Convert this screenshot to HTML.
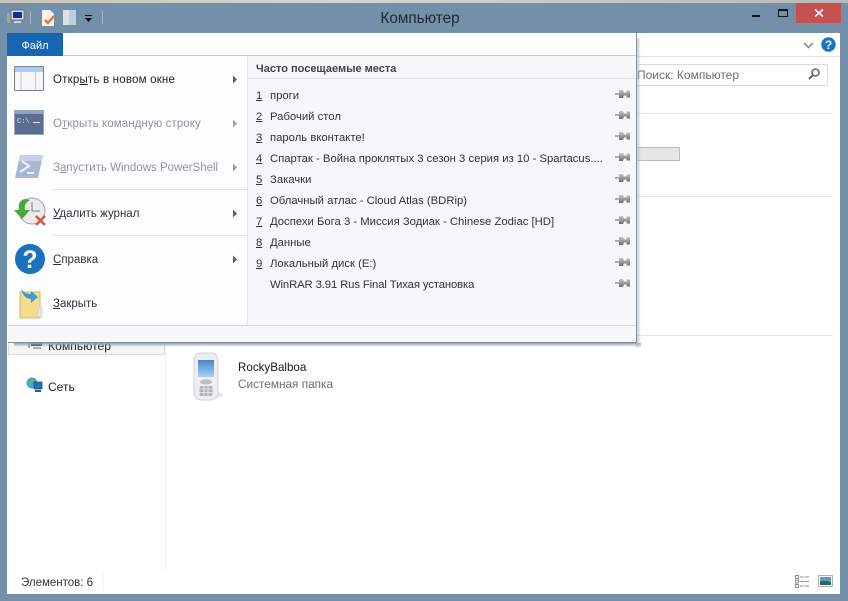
<!DOCTYPE html>
<html lang="ru"><head><meta charset="utf-8"><title>Компьютер</title>
<style>
html,body{margin:0;padding:0;background:#7390a8}
#p{position:relative;width:848px;height:601px;overflow:hidden;background:#7390a8;font-family:"Liberation Sans",sans-serif;font-size:11.5px;color:#2b2b2b}
#p div,#p svg{position:absolute}
.t{white-space:nowrap;line-height:14px}
.g{color:#8f959c}
.n{left:256px;color:#333;font-size:11.3px}
.r{left:270px;color:#333;font-size:11.3px}
u{text-underline-offset:1px}
</style></head><body><div id="p">
<svg width="0" height="0" style="left:0;top:0"><defs><linearGradient id="pg" x1="0" y1="0" x2="0" y2="1"><stop offset="0" stop-color="#c4c4c4"/><stop offset=".5" stop-color="#9a9a9a"/><stop offset="1" stop-color="#6f6f6f"/></linearGradient><symbol id="pin" viewBox="0 0 16 10"><path d="M0 5h5" stroke="#666"/><path d="M4 1h4l1 2.500h2.500V1.500H15v7h-3.500V6.500H9L8 9H4z" fill="url(#pg)"/></symbol></defs></svg>
<div style="left:0;top:0;width:848px;height:3px;background:linear-gradient(90deg,#c9c4bb,#d6d3cd 40%,#b9bbb9)"></div>
<div style="left:7px;top:33px;width:833px;height:561px;background:#fff"></div>
<div class="t" style="left:320px;top:10px;width:200px;text-align:center;font-size:15.300px;line-height:18px;color:#1c2a36">Компьютер</div>

<!-- title bar icons -->
<svg style="left:6px;top:8px" width="20" height="18" viewBox="0 0 20 18"><rect x="1" y="5" width="3" height="10" fill="#8fb38c"/><rect x="5" y="2" width="13" height="10" fill="#d8dee4" stroke="#6a7480"/><rect x="7" y="4" width="9" height="6" fill="#0f2f9c"/><rect x="8" y="13" width="7" height="2" fill="#cfd4d8"/></svg>
<div style="left:30px;top:11px;width:1px;height:13px;background:#a4b6c6"></div>
<svg style="left:40px;top:9px" width="18" height="18" viewBox="0 0 18 18"><path d="M2 1h8l4 4v12H2z" fill="#f5f3ee"/><path d="M5 11l3 3 6-7" fill="none" stroke="#e4743a" stroke-width="2.400"/></svg>
<svg style="left:62px;top:9px" width="15" height="17" viewBox="0 0 15 17"><rect x="1" y="1" width="6" height="15" fill="#d9e1e9"/><rect x="7" y="1" width="7" height="15" fill="#c0cddb"/></svg>
<svg style="left:84px;top:15px" width="9" height="8" viewBox="0 0 9 8"><rect x="1" y="0" width="7" height="1" fill="#111"/><path d="M1 3h7L4.500 7z" fill="#111"/></svg>
<div style="left:102px;top:11px;width:1px;height:13px;background:#a4b6c6"></div>

<!-- window buttons -->
<div style="left:752px;top:15px;width:8px;height:2px;background:#101820"></div>
<div style="left:778px;top:9px;width:8px;height:5px;border:1px solid #101820;border-top-width:2px"></div>
<div style="left:796px;top:3px;width:45px;height:20px;background:#c75050"></div>
<svg style="left:812px;top:7px" width="14" height="12" viewBox="0 0 14 12"><path d="M3 2.500l8 7M11 2.500l-8 7" stroke="#fff" stroke-width="1.500"/></svg>

<!-- explorer right behind menu -->
<svg style="left:802px;top:41px" width="13" height="9" viewBox="0 0 13 9"><path d="M2 2l4.500 4.500L11 2" fill="none" stroke="#8a8f94" stroke-width="1.600"/></svg>
<svg style="left:821px;top:37px" width="15" height="15" viewBox="0 0 15 15"><circle cx="7.500" cy="7.500" r="7.200" fill="#1a73c0"/><text x="7.500" y="12" text-anchor="middle" font-family="Liberation Sans" font-weight="bold" font-size="12" fill="#fff">?</text></svg>
<div style="left:636px;top:56px;width:204px;height:1px;background:#e2e3e4"></div>
<div style="left:630px;top:64px;width:196px;height:20px;border:1px solid #dcdcdc"></div>
<div class="t" style="left:637px;top:68px;color:#6d6d6d;font-size:12px">Поиск: Компьютер</div>
<svg style="left:807px;top:67px" width="14" height="14" viewBox="0 0 14 14"><circle cx="8.500" cy="5.500" r="3.500" fill="none" stroke="#6a6a6a" stroke-width="1.600"/><path d="M6 8l-4 4" stroke="#6a6a6a" stroke-width="2"/></svg>
<div style="left:636px;top:113px;width:197px;height:1px;background:#e5e5e5"></div>
<div style="left:636px;top:147px;width:43px;height:12px;background:#e6e6e6;border:1px solid #bcbcbc;border-left:0"></div>
<div style="left:636px;top:196px;width:197px;height:1px;background:#e5e5e5"></div>
<div style="left:636px;top:335px;width:197px;height:1px;background:#e5e5e5"></div>
<div style="left:165px;top:340px;width:1px;height:232px;background:#f0f0f0"></div>

<!-- nav -->
<div style="left:8px;top:340px;width:155px;height:14px;background:#f4f5f6;border:1px solid #dcdcdc;border-top:0"></div>
<svg style="left:27px;top:340px" width="17" height="10" viewBox="0 0 17 10"><rect x="4" y="0" width="11" height="6" fill="#1c3a8a"/><rect x="1" y="2" width="2" height="6" fill="#9aa6ae"/><rect x="6" y="7" width="8" height="2" fill="#a8aeb4"/></svg>
<div class="t" style="left:48px;top:339px;font-size:12.200px;color:#222">Компьютер</div>
<svg style="left:26px;top:377px" width="18" height="17" viewBox="0 0 18 17"><circle cx="6" cy="6" r="5.500" fill="#4aa3c8"/><path d="M3 3l4-1 1 3-3 2z" fill="#6fb35a"/><rect x="8" y="5" width="8" height="7" fill="#1d74b8" stroke="#16477e" stroke-width=".7"/><rect x="9" y="13" width="6" height="2" fill="#3a5a80"/></svg>
<div class="t" style="left:48px;top:380px;font-size:12px;color:#222">Сеть</div>

<!-- phone -->
<svg style="left:190px;top:351px" width="36" height="50" viewBox="0 0 36 50"><defs><linearGradient id="sc" x1="0" y1="0" x2="0" y2="1"><stop offset="0" stop-color="#4a85cc"/><stop offset="1" stop-color="#a9d0f2"/></linearGradient></defs><ellipse cx="23" cy="44" rx="10" ry="3" fill="#e6e6e6"/><rect x="4" y="2" width="24" height="47" rx="7" fill="#eceef0" stroke="#cfd1d3"/><rect x="8" y="9" width="16" height="17" fill="url(#sc)"/><ellipse cx="16" cy="31" rx="6" ry="2.500" fill="#bcbfc2"/><rect x="9.500" y="35" width="13" height="10" rx="2" fill="#aeb2b6"/><path d="M9.500 38h13M9.500 41.500h13M14 35v10M18 35v10" stroke="#eef0f1" stroke-width=".8"/></svg>
<div class="t" style="left:238px;top:361px;font-size:11.600px;color:#1a1a1a">RockyBalboa</div>
<div class="t" style="left:238px;top:377px;font-size:11.800px;color:#6d6d6d">Системная папка</div>

<!-- status -->
<div class="t" style="left:21px;top:576px;font-size:11.500px;color:#333">Элементов: 6</div>
<div style="left:103px;top:574px;width:1px;height:17px;background:#f0f0f0"></div>
<svg style="left:795px;top:575px" width="16" height="14" viewBox="0 0 16 14"><g fill="none" stroke="#8a8f94"><rect x=".5" y=".5" width="3" height="3"/><rect x=".5" y="5" width="3" height="3"/><rect x=".5" y="9.500" width="3" height="3"/><path d="M5 2h10M5 6.500h10M5 11h10" stroke-dasharray="4 1"/></g></svg>
<svg style="left:818px;top:575px" width="15" height="14" viewBox="0 0 15 14"><rect x=".5" y=".5" width="14" height="11" fill="#fff" stroke="#a8b4bc"/><rect x="2" y="2" width="11" height="8" fill="#5f9ac6"/><path d="M2 7c3-2 7-1 11 0v3H2z" fill="#2f6a4a"/></svg>

<!-- menu shadow & panel -->
<div style="left:14px;top:343px;width:627px;height:4px;background:linear-gradient(#9ca3a8,rgba(200,205,208,0))"></div>
<div style="left:636px;top:38px;width:5px;height:309px;background:linear-gradient(90deg,#b5bcc1,rgba(225,228,230,0))"></div>
<div style="left:8px;top:33px;width:629px;height:310px;background:#fcfdfe;border-right:1px solid #8a97a3;border-bottom:1px solid #7f8b96;box-sizing:border-box"></div>
<div style="left:8px;top:33px;width:628px;height:23px;background:#fff;border-bottom:1px solid #c3cad2;box-sizing:border-box"></div>
<div style="left:7px;top:33px;width:56px;height:23px;background:#1766b4"></div>
<div class="t" style="left:7px;top:39px;width:56px;text-align:center;color:#fff;font-size:11px">Файл</div>
<div style="left:247px;top:56px;width:389px;height:269px;background:#f5f7f9;border-left:1px solid #e4e6e9;box-sizing:border-box"></div>
<div style="left:8px;top:325px;width:628px;height:17px;background:#f6f7f8;border-top:1px solid #d5dbe2;box-sizing:border-box"></div>
<div style="left:52px;top:189px;width:195px;height:1px;background:#e3e5e8"></div>
<div style="left:52px;top:235px;width:195px;height:1px;background:#e3e5e8"></div>
<div style="left:248px;top:78px;width:388px;height:1px;background:#dde1e6"></div>

<!-- menu icons -->
<svg style="left:14px;top:66px" width="31" height="27" viewBox="0 0 31 27"><rect x=".5" y=".5" width="29" height="24" rx="1" fill="#f6f6f6" stroke="#7c8087"/><rect x="1" y="1" width="28" height="5" fill="#a5cdf5"/><path d="M7 6v18M21.500 6v18" stroke="#c8c8c8"/></svg>
<svg style="left:14px;top:110px" width="31" height="26" viewBox="0 0 31 26"><rect x=".5" y=".5" width="29" height="24" fill="#5a6e92" stroke="#9aa6b8"/><rect x="1" y="1" width="28" height="3" fill="#8fa4c4"/><text x="3" y="13" font-family="Liberation Mono" font-size="7" fill="#dfe4ec">C:\</text><rect x="19" y="12" width="7" height="1" fill="#dfe4ec"/></svg>
<svg style="left:14px;top:154px" width="31" height="26" viewBox="0 0 31 26"><path d="M6 1h23l-5 23H1z" fill="#a8b8d2"/><path d="M6 1h23l-1 6H5z" fill="#c6d2e4"/><path d="M8 7l7 5-9 6M13 19h7" fill="none" stroke="#eef2f8" stroke-width="2"/></svg>
<svg style="left:13px;top:197px" width="35" height="32" viewBox="0 0 35 32"><circle cx="19" cy="14" r="13" fill="#e9ebec" stroke="#a2a6a9"/><path d="M19 5v9h8" stroke="#75808a" fill="none"/><path d="M12 2C6 3 5 9 6 13H1l8 9 8-9h-5C11 9 12 6 17 3z" fill="#4aa73a"/><path d="M23 19l9 9M32 19l-9 9" stroke="#d8553f" stroke-width="2.600"/></svg>
<svg style="left:15px;top:244px" width="30" height="30" viewBox="0 0 30 30"><circle cx="15" cy="15" r="15" fill="#1a71bd"/><text x="15" y="24" text-anchor="middle" font-family="Liberation Sans" font-weight="bold" font-size="25" fill="#fff">?</text></svg>
<svg style="left:18px;top:287px" width="28" height="32" viewBox="0 0 28 32"><path d="M2 5h20v26H2z" fill="#f3dd8c" stroke="#d2bb6b"/><rect x="20" y="20" width="4" height="10" fill="#e6e6e0" stroke="#c8c8c0" stroke-width=".5"/><path d="M3 1c2 5 6 6 10 6V4l7 6-7 6v-4C8 12 4 8 3 1z" fill="#3a9bd8"/></svg>

<!-- menu text -->
<div class="t" style="left:53px;top:73px;color:#222;letter-spacing:.2px">Откр<u>ы</u>ть в новом окне</div>
<div class="t g" style="left:53px;top:117px;letter-spacing:.08px">О<u>т</u>крыть командную строку</div>
<div class="t g" style="left:53px;top:161px">З<u>а</u>пустить Windows PowerShell</div>
<div class="t" style="left:53px;top:207px;color:#333"><u>У</u>далить журнал</div>
<div class="t" style="left:53px;top:253px;color:#333"><u>С</u>правка</div>
<div class="t" style="left:53px;top:297px;color:#333"><u>З</u>акрыть</div>
<svg style="left:232px;top:75px" width="6" height="9" viewBox="0 0 6 9"><path d="M1 .5L5 4.500 1 8.500z" fill="#5a6068"/></svg>
<svg style="left:232px;top:119px" width="6" height="9" viewBox="0 0 6 9"><path d="M1 .5L5 4.500 1 8.500z" fill="#9aa0a6"/></svg>
<svg style="left:232px;top:163px" width="6" height="9" viewBox="0 0 6 9"><path d="M1 .5L5 4.500 1 8.500z" fill="#9aa0a6"/></svg>
<svg style="left:232px;top:209px" width="6" height="9" viewBox="0 0 6 9"><path d="M1 .5L5 4.500 1 8.500z" fill="#5a6068"/></svg>
<svg style="left:232px;top:255px" width="6" height="9" viewBox="0 0 6 9"><path d="M1 .5L5 4.500 1 8.500z" fill="#5a6068"/></svg>

<div class="t" style="left:256px;top:62px;font-weight:bold;font-size:11px;color:#444">Часто посещаемые места</div>

<div class="t n" style="top:89px"><u>1</u></div><div class="t r" style="top:89px">проги</div>
<div class="t n" style="top:110px"><u>2</u></div><div class="t r" style="top:110px">Рабочий стол</div>
<div class="t n" style="top:131px"><u>3</u></div><div class="t r" style="top:131px">пароль вконтакте!</div>
<div class="t n" style="top:152px"><u>4</u></div><div class="t r" style="top:152px">Спартак - Война проклятых 3 сезон 3 серия из 10 - Spartacus....</div>
<div class="t n" style="top:173px"><u>5</u></div><div class="t r" style="top:173px">Закачки</div>
<div class="t n" style="top:194px"><u>6</u></div><div class="t r" style="top:194px">Облачный атлас - Cloud Atlas (BDRip)</div>
<div class="t n" style="top:215px"><u>7</u></div><div class="t r" style="top:215px">Доспехи Бога 3 - Миссия Зодиак - Chinese Zodiac [HD]</div>
<div class="t n" style="top:236px"><u>8</u></div><div class="t r" style="top:236px">Данные</div>
<div class="t n" style="top:257px"><u>9</u></div><div class="t r" style="top:257px">Локальный диск (E:)</div>
<div class="t r" style="top:278px;letter-spacing:-.12px">WinRAR 3.91 Rus Final Тихая установка</div>

<!-- pins -->
<svg style="left:615px;top:89px" width="16" height="10"><use href="#pin" width="16" height="10"/></svg>
<svg style="left:615px;top:110px" width="16" height="10"><use href="#pin" width="16" height="10"/></svg>
<svg style="left:615px;top:131px" width="16" height="10"><use href="#pin" width="16" height="10"/></svg>
<svg style="left:615px;top:152px" width="16" height="10"><use href="#pin" width="16" height="10"/></svg>
<svg style="left:615px;top:173px" width="16" height="10"><use href="#pin" width="16" height="10"/></svg>
<svg style="left:615px;top:194px" width="16" height="10"><use href="#pin" width="16" height="10"/></svg>
<svg style="left:615px;top:215px" width="16" height="10"><use href="#pin" width="16" height="10"/></svg>
<svg style="left:615px;top:236px" width="16" height="10"><use href="#pin" width="16" height="10"/></svg>
<svg style="left:615px;top:257px" width="16" height="10"><use href="#pin" width="16" height="10"/></svg>
<svg style="left:615px;top:278px" width="16" height="10"><use href="#pin" width="16" height="10"/></svg>
</div></body></html>
